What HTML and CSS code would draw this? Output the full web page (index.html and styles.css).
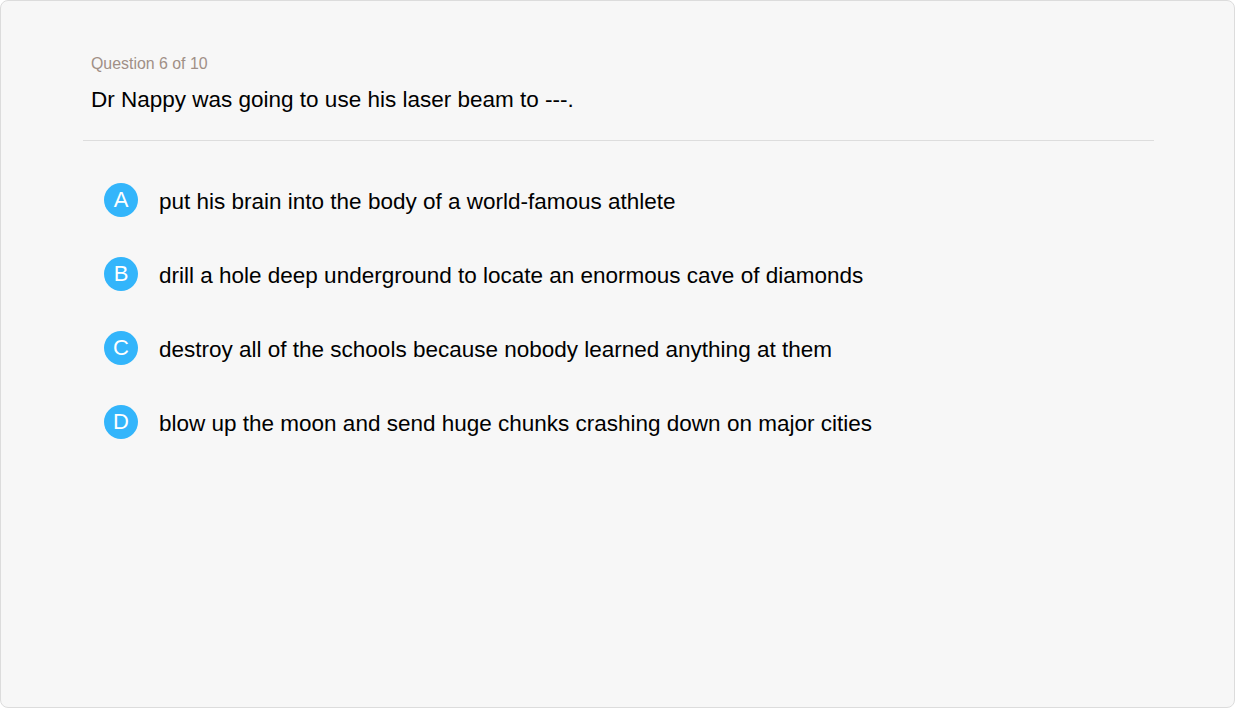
FILE: index.html
```html
<!DOCTYPE html>
<html lang="en">
<head>
<meta charset="utf-8">
<title>Quiz</title>
<link rel="stylesheet" href="styles.css">
</head>
<body>
<div class="card">
  <div class="head">
    <div class="meta">Question 6 of 10</div>
    <div class="question">Dr Nappy was going to use his laser beam to ---.</div>
  </div>
  <ul class="options">
    <li class="option"><span class="badge">A</span><span class="label">put his brain into the body of a world-famous athlete</span></li>
    <li class="option"><span class="badge">B</span><span class="label">drill a hole deep underground to locate an enormous cave of diamonds</span></li>
    <li class="option"><span class="badge">C</span><span class="label">destroy all of the schools because nobody learned anything at them</span></li>
    <li class="option"><span class="badge">D</span><span class="label">blow up the moon and send huge chunks crashing down on major cities</span></li>
  </ul>
</div>
</body>
</html>
```

FILE: styles.css
```css
html, body {
  margin: 0;
  padding: 0;
  background: #ffffff;
}
body {
  font-family: "Liberation Sans", Arial, sans-serif;
}
.card {
  box-sizing: border-box;
  width: 1235px;
  height: 708px;
  border: 1px solid #dcdcdc;
  border-radius: 8px;
  background: #f7f7f7;
  padding: 51px 80px 0 82px;
  overflow: hidden;
}
.head {
  padding: 0 8px 25px 8px;
  border-bottom: 1px solid #dddddd;
}
.meta {
  font-size: 15.9px;
  line-height: 24px;
  color: #a08f86;
}
.question {
  margin-top: 9px;
  font-size: 22.5px;
  line-height: 30px;
  color: #000000;
}
.options {
  list-style: none;
  margin: 42px 0 0 0;
  padding: 0 0 0 21px;
  display: flex;
  flex-direction: column;
  gap: 40px;
}
.option {
  display: flex;
  align-items: flex-start;
  gap: 21px;
  height: 34px;
}
.badge {
  flex: none;
  width: 34px;
  height: 34px;
  border-radius: 50%;
  background: #33b5fb;
  color: #ffffff;
  font-size: 22px;
  line-height: 34px;
  text-align: center;
}
.label {
  padding-top: 2px;
  font-size: 22.5px;
  line-height: 34px;
  color: #000000;
}
```
